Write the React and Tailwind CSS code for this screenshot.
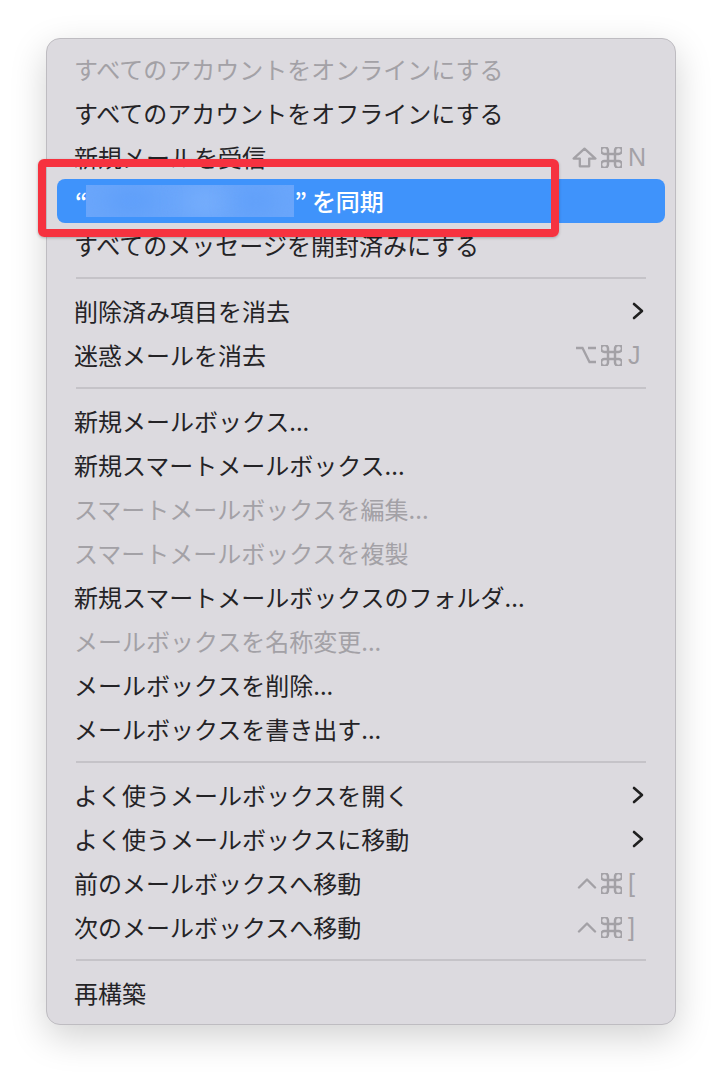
import React from "react";

const Cmd = () => (
  <svg width="21" height="21" viewBox="3 3 18 18" fill="none" stroke="currentColor" strokeWidth="2.1" strokeLinecap="round" strokeLinejoin="round">
    <path d="M15 6v12a3 3 0 1 0 3-3H6a3 3 0 1 0 3 3V6a3 3 0 1 0-3 3h12a3 3 0 1 0-3-3" />
  </svg>
);

const Shift = () => (
  <svg width="25" height="21" viewBox="0 0 24 20" fill="none" stroke="currentColor" strokeWidth="2.2" strokeLinejoin="round">
    <path d="M12 1.5 L22.5 11 H16.5 V18.5 H7.5 V11 H1.5 Z" />
  </svg>
);

const Opt = () => (
  <svg width="22" height="18" viewBox="0 0 22 18" fill="none" stroke="currentColor" strokeWidth="2.3">
    <path d="M1 2 H7.5 L14.5 16 H21 M13 2 H21" />
  </svg>
);

const Ctrl = () => (
  <svg width="20" height="12" viewBox="0 0 20 12" fill="none" stroke="currentColor" strokeWidth="2.4" strokeLinecap="round" strokeLinejoin="round">
    <path d="M2 10.5 L10 2.5 L18 10.5" />
  </svg>
);

const Chevron = () => (
  <svg width="12" height="18" viewBox="0 0 12 18" fill="none" stroke="#1f1f1f" strokeWidth="2.6" strokeLinecap="round" strokeLinejoin="round">
    <path d="M2 2 L10 9 L2 16" />
  </svg>
);

const mods = { shift: Shift, cmd: Cmd, opt: Opt, ctrl: Ctrl };

const sections = [
  [
    { label: "すべてのアカウントをオンラインにする", disabled: true },
    { label: "すべてのアカウントをオフラインにする" },
    { label: "新規メールを受信", keys: ["shift", "cmd"], key: "N" },
    { label: "sync", selected: true },
    { label: "すべてのメッセージを開封済みにする" },
  ],
  [
    { label: "削除済み項目を消去", submenu: true },
    { label: "迷惑メールを消去", keys: ["opt", "cmd"], key: "J" },
  ],
  [
    { label: "新規メールボックス..." },
    { label: "新規スマートメールボックス..." },
    { label: "スマートメールボックスを編集...", disabled: true },
    { label: "スマートメールボックスを複製", disabled: true },
    { label: "新規スマートメールボックスのフォルダ..." },
    { label: "メールボックスを名称変更...", disabled: true },
    { label: "メールボックスを削除..." },
    { label: "メールボックスを書き出す..." },
  ],
  [
    { label: "よく使うメールボックスを開く", submenu: true },
    { label: "よく使うメールボックスに移動", submenu: true },
    { label: "前のメールボックスへ移動", keys: ["ctrl", "cmd"], key: "[" },
    { label: "次のメールボックスへ移動", keys: ["ctrl", "cmd"], key: "]" },
  ],
  [{ label: "再構築" }],
];

const jp = { fontFamily: '"Noto Sans CJK JP", "Noto Sans", sans-serif' };

const MenuItem = ({ item }) => {
  if (item.selected) {
    return (
      <div className="relative mx-[10px] h-[44px] flex items-center pl-[18px] pr-4 rounded-[8px] bg-[#3f93fb] text-white text-[24px] leading-none font-medium">
        <span>“</span>
        <span className="relative inline-block w-[208px] h-[32px] -ml-[1px] bg-[#6aa6fb] overflow-hidden">
          <span className="absolute left-[20px] top-[4px] w-[50px] h-[24px] rounded-full bg-[#5c9df9] blur-md" />
          <span className="absolute left-[100px] top-[6px] w-[40px] h-[22px] rounded-full bg-[#7ab0fc] blur-md" />
          <span className="absolute left-[150px] top-[4px] w-[40px] h-[24px] rounded-full bg-[#5e9ef9] blur-md" />
        </span>
        <span>”</span>
        <span className="ml-[5px]">を同期</span>
        <div className="absolute left-[-19px] top-[-20px] w-[521px] h-[78px] border-[8px] border-[#f6323f] rounded-[6px] shadow-[0_1px_3px_rgba(0,0,0,0.25)]" />
      </div>
    );
  }
  return (
    <div
      className={`mx-[10px] h-[44px] flex items-center pl-[17px] pr-4 text-[24px] leading-none ${
        item.disabled ? "text-[#a3a1a6]" : "text-[#242326]"
      }`}
    >
      <span className="flex-1">{item.label}</span>
      {item.keys && (
        <span className="flex items-center text-[#a3a1a6]">
          <span className="flex items-center gap-[4px]">
            {item.keys.map((k) => {
              const Icon = mods[k];
              return <Icon key={k} />;
            })}
          </span>
          <span
            className="ml-[6px] w-[21px] text-[25px] leading-none"
            style={{ fontFamily: '"Liberation Sans", Arial, sans-serif' }}
          >
            {item.key}
          </span>
        </span>
      )}
      {item.submenu && (
        <span className="w-[21px] pl-[4px] flex items-center">
          <Chevron />
        </span>
      )}
    </div>
  );
};

export default function App() {
  return (
    <div className="w-[722px] h-[1080px] bg-white pt-[38px] pl-[46px]" style={jp}>
      <div className="w-[630px] rounded-[14px] bg-[#dcdadf] border border-[#bebcc1] pt-[8px] pb-[9px] shadow-[0_12px_36px_rgba(0,0,0,0.18)]">
        {sections.map((items, i) => (
          <div key={i}>
            {i > 0 && (
              <div className="h-[22px] flex items-center px-[29px]">
                <div className="w-full h-[2px] bg-[#c5c3c8]" />
              </div>
            )}
            {items.map((item) => (
              <MenuItem key={item.label} item={item} />
            ))}
          </div>
        ))}
      </div>
    </div>
  );
}
